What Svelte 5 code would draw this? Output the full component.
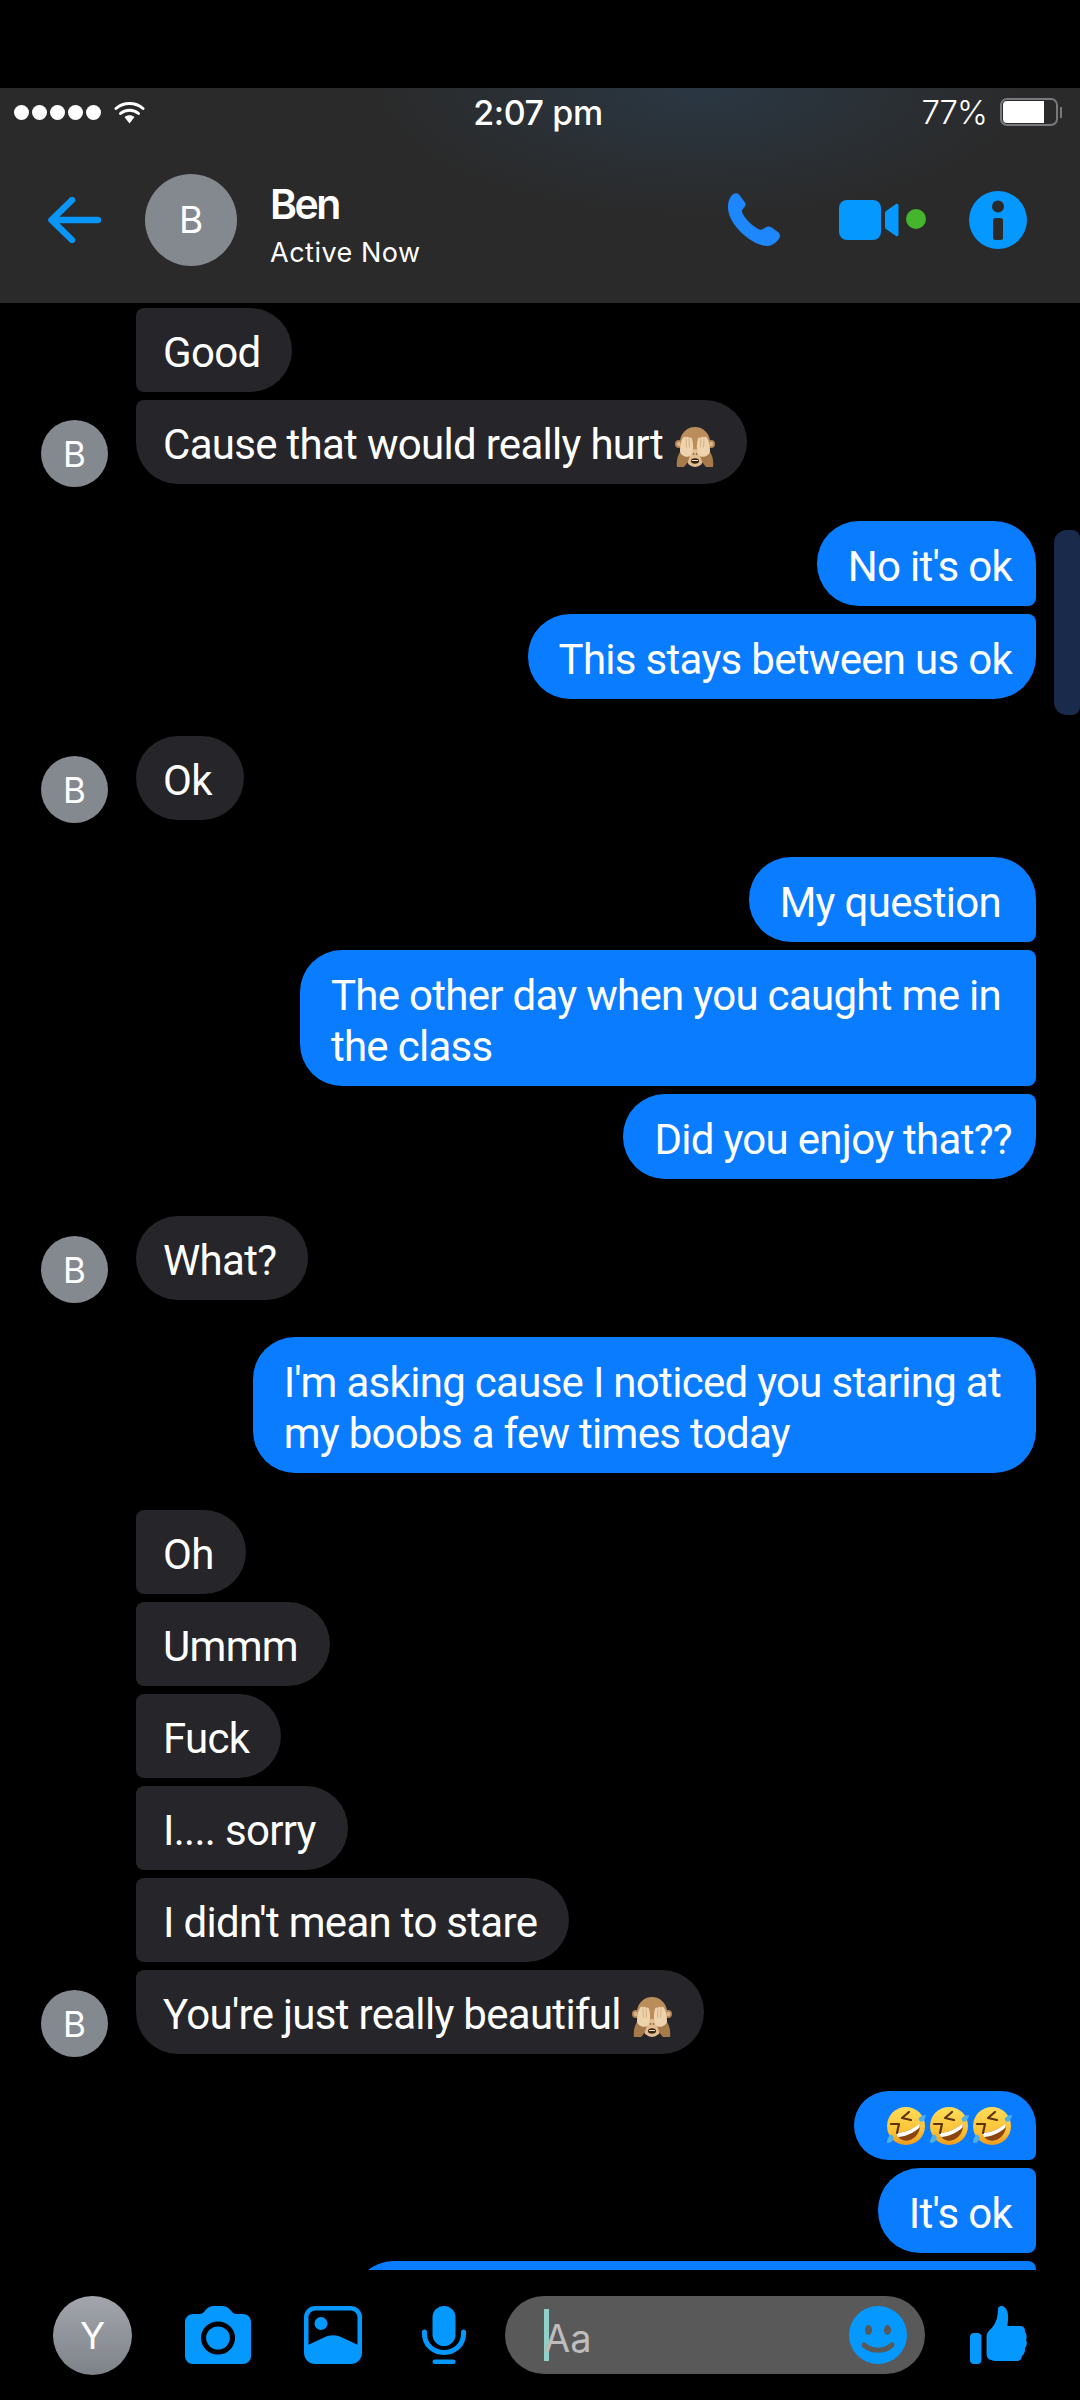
<script>
	const messages = [
		{ id: 1, side: 'in', text: 'Good', shape: 'first' },
		{ id: 2, side: 'in', text: 'Cause that would really hurt', shape: 'last', avatar: true, emoji: 'monkey' },
		{ id: 3, side: 'out', text: "No it's ok", shape: 'first', gap: true },
		{ id: 4, side: 'out', text: 'This stays between us ok', shape: 'last' },
		{ id: 5, side: 'in', text: 'Ok', shape: 'solo', avatar: true, gap: true },
		{ id: 6, side: 'out', text: 'My question', shape: 'first wrapped', gap: true },
		{ id: 7, side: 'out', text: 'The other day when you caught me in\nthe class', shape: 'middle wrapped' },
		{ id: 8, side: 'out', text: 'Did you enjoy that??', shape: 'last' },
		{ id: 9, side: 'in', text: 'What?', shape: 'solo', avatar: true, gap: true },
		{ id: 10, side: 'out', text: "I'm asking cause I noticed you staring at\nmy boobs a few times today", shape: 'solo wrapped', gap: true },
		{ id: 11, side: 'in', text: 'Oh', shape: 'first', gap: true },
		{ id: 12, side: 'in', text: 'Ummm', shape: 'middle' },
		{ id: 13, side: 'in', text: 'Fuck', shape: 'middle' },
		{ id: 14, side: 'in', text: 'I.... sorry', shape: 'middle' },
		{ id: 15, side: 'in', text: "I didn't mean to stare", shape: 'middle' },
		{ id: 16, side: 'in', text: "You're just really beautiful", shape: 'last', avatar: true, emoji: 'monkey' },
		{ id: 17, side: 'out', text: '', shape: 'first', gap: true, emoji: 'rofl' },
		{ id: 18, side: 'out', text: "It's ok", shape: 'middle' },
		{ id: 19, side: 'out', text: '', shape: 'middle cut' }
	];
</script>

{#snippet monkey()}
	<svg class="monkey" viewBox="0 0 40 40" aria-hidden="true">
		<circle cx="4" cy="17" r="4" fill="#b38654" />
		<circle cx="36" cy="17" r="4" fill="#b38654" />
		<circle cx="4" cy="17" r="2.200" fill="#dcb78d" />
		<circle cx="36" cy="17" r="2.200" fill="#dcb78d" />
		<ellipse cx="20" cy="15" rx="15" ry="15" fill="#bb8d5b" />
		<ellipse cx="20" cy="31" rx="9" ry="9" fill="#e1bd92" />
		<ellipse cx="20" cy="34" rx="4" ry="2.800" fill="#3a2213" />
		<path d="M17 33h6v1h-6z" fill="#efe0cc" />
		<circle cx="18.500" cy="27" r=".8" fill="#6b4526" />
		<circle cx="21.500" cy="27" r=".8" fill="#6b4526" />
		<path d="M2 40c-1-7 1-13 5-18l8 6c-1 5-3 9-6 12z" fill="#a77a4b" />
		<path d="M38 40c1-7-1-13-5-18l-8 6c1 5 3 9 6 12z" fill="#a77a4b" />
		<path d="M5 24c0-6 1-10 3-13 1-2 3-1.500 3 0 .5-1.500 2.500-1.800 3 0 .8-1 2.500-.8 3 .8 1.200 4 1.500 9 .5 13-1 3.200-2.500 5-5 5-3 0-7.500-2-7.500-5.800z" fill="#eed3ad" />
		<path d="M35 24c0-6-1-10-3-13-1-2-3-1.500-3 0-.5-1.500-2.500-1.800-3 0-.8-1-2.500-.8-3 .8-1.200 4-1.500 9-.5 13 1 3.200 2.500 5 5 5 3 0 7.500-2 7.500-5.800z" fill="#eed3ad" />
		<path d="M11 11.500l.5 9M14 11.500l.5 9M29 11.500l-.5 9M26 11.500l-.5 9" stroke="#cfa77c" stroke-width=".8" fill="none" />
	</svg>
{/snippet}

{#snippet rofl()}
	<svg class="rofl" viewBox="0 0 40 40" aria-hidden="true">
		<defs>
			<linearGradient id="roflFace" x1="0" y1="0" x2="0" y2="1">
				<stop offset="0" stop-color="#ffdd5c" />
				<stop offset="0.65" stop-color="#fcc134" />
				<stop offset="1" stop-color="#ee9a1c" />
			</linearGradient>
		</defs>
		<circle cx="20" cy="20" r="19" fill="url(#roflFace)" />
		<path d="M10 27c8 0 18-4 24-10 1 8-4 16-12 17.500-6 1-10-2.500-12-7.500z" fill="#8a4510" />
		<path d="M10 27c8 0 18-4 24-10l-.5 4.500C28 27 18 31 12 31z" fill="#fff" />
		<path d="M23 6l-7 6 9 2M5 18h8l-2 9" fill="none" stroke="#5b3410" stroke-width="2.200" stroke-linecap="round" stroke-linejoin="round" />
		<path d="M33 12c2-2 4-3 7-3-.5 3-1.500 5-3.500 6.500-2.500 1-4.500-1.500-3.500-3.500z" fill="#4fb0e8" />
		<path d="M4 29c-2 2-3 5-3 8 3 0 5-1 6.500-3.500 1-2.500-1.500-5.500-3.500-4.500z" fill="#4fb0e8" />
	</svg>
{/snippet}

<div class="phone">
	<div class="topgap"></div>

	<header class="header">
		<div class="status">
			<div class="status-left">
				<div class="dots">
					<span></span><span></span><span></span><span></span><span></span>
				</div>
				<svg class="wifi" viewBox="0 0 30 23" aria-hidden="true">
					<path d="M1.500 7.500C9 .8 21 .8 28.500 7.500" />
					<path d="M6 12.500c5-4.500 13-4.500 18 0" />
					<path class="wedge" d="M10 16c3-2.200 7-2.200 10 0l-5 6.500z" />
				</svg>
			</div>
			<div class="time">2:07 pm</div>
			<div class="status-right">
				<span class="percent">77%</span>
				<div class="battery"><div class="level"></div></div>
				<div class="nub"></div>
			</div>
		</div>

		<div class="nav">
			<svg class="back" viewBox="0 0 53 46" aria-hidden="true">
				<path d="M50 23H4M24 3 3.500 23 24 43" />
			</svg>
			<div class="avatar big">B</div>
			<div class="who">
				<div class="name">Ben</div>
				<div class="active">Active Now</div>
			</div>
			<svg class="call" viewBox="0 0 50 53" preserveAspectRatio="none" aria-hidden="true">
				<path d="M3 3C5 0 9-1 11 2l5 7c1.500 2 1 4-.5 5.500L13.500 17c-.5 1 0 3 2.500 7 3.500 5 8 9 13 12 2 1 3.500 1 4.500 0l2.500-1.500c2-1.500 4-1.500 6 0l6 4.500c2.500 2 2.500 5 .5 7.500C46 50 42 53 38 53 24 53-1 32 0 13 0 9 1.500 5.500 3 3z" />
			</svg>
			<svg class="video" viewBox="0 0 87 40" aria-hidden="true">
				<rect x="0" y="0" width="42" height="40" rx="8" />
				<path d="M46 13c0-1 .5-1.500 1-2l10-7c1-.7 2.500 0 2.500 1.500v29c0 1.500-1.500 2.200-2.500 1.500l-10-7c-.5-.5-1-1-1-2z" />
				<circle class="online" cx="77" cy="19" r="10" />
			</svg>
			<svg class="info" viewBox="0 0 58 58" aria-hidden="true">
				<circle cx="29" cy="29" r="29" />
				<circle class="cut" cx="29" cy="15.500" r="6" />
				<rect class="cut" x="24" y="27" width="10" height="22" rx="2.500" />
			</svg>
		</div>
	</header>

	<main class="thread">
		{#each messages as m (m.id)}
			<div class="row {m.side}" class:gap={m.gap}>
				{#if m.side === 'in'}
					<div class="slot">
						{#if m.avatar}<div class="avatar small">B</div>{/if}
					</div>
				{/if}
				<div class="bubble {m.side} {m.shape}" class:emojis={m.emoji === 'rofl'}>
					{m.text}
					{#if m.emoji === 'monkey'}
						{@render monkey()}
					{:else if m.emoji === 'rofl'}
						{@render rofl()}{@render rofl()}{@render rofl()}
					{/if}
				</div>
			</div>
		{/each}
		<div class="scrollbar"></div>
	</main>

	<footer class="composer">
		<div class="avatar me">Y</div>
		<svg class="camera" viewBox="0 0 64 58" preserveAspectRatio="none" aria-hidden="true">
			<path d="M8 8h6c3 0 4.500-2 6-4 2-2.500 5-4 8-4h8c3 0 6 1.500 8 4 1.500 2 3 4 6 4h6c4.500 0 8 3.500 8 8v34c0 4.500-3.500 8-8 8H8c-4.500 0-8-3.500-8-8V16c0-4.500 3.500-8 8-8z" />
			<circle class="ring" cx="32" cy="32" r="14" />
		</svg>
		<svg class="gallery" viewBox="0 0 58 58" aria-hidden="true">
			<rect class="frame" x="2.250" y="2.250" width="53.500" height="53.500" rx="9" />
			<circle cx="17" cy="17.500" r="6.500" />
			<path d="M4 39l16-7.500c6-3 12-3 18 0L54 39v12c0 3-2 5-5 5H9c-3 0-5-2-5-5z" />
		</svg>
		<svg class="mic" viewBox="0 0 44 58" aria-hidden="true">
			<rect x="10.500" y="0" width="23" height="40" rx="11.500" />
			<path class="cradle" d="M2.500 26v2c0 10 8 18.500 19.500 18.500s19.500-8.500 19.500-18.500v-2" />
			<rect x="10.500" y="53.500" width="23" height="4.500" rx="2.250" />
		</svg>
		<div class="input">
			<span class="caret"></span>
			<span class="placeholder">Aa</span>
			<svg class="smile" viewBox="0 0 58 58" aria-hidden="true">
				<circle cx="29" cy="29" r="29" />
				<ellipse class="cut" cx="19.500" cy="24" rx="3.500" ry="5" />
				<ellipse class="cut" cx="38.500" cy="24" rx="3.500" ry="5" />
				<path class="mouth" d="M15 39c8 7 20 7 28 0" />
			</svg>
		</div>
		<svg class="thumb" viewBox="0 0 55 58" preserveAspectRatio="none" aria-hidden="true">
			<rect x="0" y="27" width="11" height="31" rx="4" />
			<path d="M27 3c0-3 4-4 6-2 4 3 4.500 9 3 19h12c4 0 5.500 3 5 6 2 2 2 6 1 8 1.500 2 1 6-1 8 .5 4-1 7-3 8 0 3-2 5-5 5H26c-6 0-10-2-10-7V30c0-3 2-5 4-7 4-4 7-10 7-20z" />
		</svg>
	</footer>
</div>

<style>
	:global(body) {
		background: #000;
	}

	.phone {
		width: 1080px;
		height: 2400px;
		display: flex;
		flex-direction: column;
		background: #000;
		font-family: Inter, 'Liberation Sans', sans-serif;
		color: #fff;
		overflow: hidden;
	}

	.topgap {
		height: 88px;
		flex: none;
	}

	.header {
		height: 215px;
		flex: none;
		background:
			radial-gradient(ellipse 330px 130px at 700px 0, #2a3743 0%, rgba(42, 55, 67, 0) 100%),
			#2a2a2a;
	}

	.status {
		height: 48px;
		display: grid;
		grid-template-columns: 1fr auto 1fr;
		align-items: center;
		padding: 0 18px 0 14px;
	}

	.status-left {
		display: flex;
		align-items: center;
		gap: 13px;
	}

	.dots {
		display: flex;
		gap: 3px;
	}

	.dots span {
		width: 15px;
		height: 15px;
		border-radius: 50%;
		background: #fff;
	}

	.wifi {
		width: 31px;
		height: 23px;
		fill: none;
		stroke: #fff;
		stroke-width: 3;
		stroke-linecap: round;
	}

	.wifi .wedge {
		fill: #fff;
		stroke: none;
	}

	.time {
		font-size: 34px;
		font-weight: 500;
		letter-spacing: -0.4px;
	}

	.status-right {
		display: flex;
		align-items: center;
		justify-content: flex-end;
	}

	.percent {
		font-size: 33px;
		font-weight: 300;
		letter-spacing: -1px;
		margin-right: 13px;
	}

	.battery {
		width: 58px;
		height: 28px;
		box-sizing: border-box;
		border: 2px solid #77797c;
		border-radius: 7px;
		padding: 1px;
	}

	.level {
		width: 41px;
		height: 100%;
		background: #fff;
		border-radius: 4px 0 0 4px;
	}

	.nub {
		width: 2px;
		height: 11px;
		margin-left: 2px;
		background: #77797c;
	}

	.nav {
		height: 167px;
		display: flex;
		align-items: center;
	}

	.back {
		width: 53px;
		height: 46px;
		margin-left: 48px;
		flex: none;
		fill: none;
		stroke: #0a96f8;
		stroke-width: 6.500;
		stroke-linecap: round;
		stroke-linejoin: round;
	}

	.avatar {
		display: flex;
		align-items: center;
		justify-content: center;
		flex: none;
		border-radius: 50%;
		background: #84888f;
		color: #fff;
	}

	.avatar.big {
		width: 92px;
		height: 92px;
		margin-left: 44px;
		font-size: 37px;
	}

	.who {
		margin-left: 33px;
		padding-top: 10px;
		flex: 1;
	}

	.name {
		font-size: 41px;
		font-weight: 600;
		letter-spacing: -2.500px;
		line-height: 50px;
	}

	.active {
		font-size: 27px;
		letter-spacing: 0.5px;
		line-height: 36px;
		margin-top: 6px;
	}

	.call {
		width: 52px;
		height: 53px;
		flex: none;
		fill: #1d87fb;
	}

	.video {
		width: 87px;
		height: 40px;
		flex: none;
		margin-left: 59px;
		fill: #0599ff;
	}

	.video .online {
		fill: #44b52c;
	}

	.info {
		width: 58px;
		height: 58px;
		flex: none;
		margin-left: 43px;
		margin-right: 53px;
		fill: #0599ff;
	}

	.info .cut {
		fill: #2a2a2a;
	}

	.thread {
		height: 1967px;
		flex: none;
		position: relative;
		overflow: hidden;
		padding-top: 5px;
		box-sizing: border-box;
	}

	.row {
		display: flex;
		align-items: flex-end;
		margin-top: 8px;
	}

	.row:first-child {
		margin-top: 0;
	}

	.row.gap {
		margin-top: 37px;
	}

	.row.in {
		padding-left: 41px;
	}

	.row.out {
		justify-content: flex-end;
		padding-right: 44px;
	}

	.slot {
		width: 95px;
		flex: none;
	}

	.avatar.small {
		width: 67px;
		height: 67px;
		margin-bottom: -3px;
		font-size: 35px;
	}

	.bubble {
		font-family: Roboto, Inter, sans-serif;
		font-size: 42px;
		letter-spacing: -0.7px;
		line-height: 51px;
		border-radius: 42px;
		box-sizing: border-box;
		white-space: pre-line;
	}

	.bubble.in {
		background: #26252a;
		height: 84px;
		padding: 19px 32px 14px 27px;
	}

	.bubble.out {
		background: #0a7cff;
		padding: 20px 24px 14px 31px;
	}

	.bubble.in.first {
		border-top-left-radius: 8px;
		border-bottom-left-radius: 8px;
	}

	.bubble.in.middle {
		border-top-left-radius: 8px;
		border-bottom-left-radius: 8px;
	}

	.bubble.in.last {
		border-top-left-radius: 8px;
	}

	.bubble.out.first {
		border-bottom-right-radius: 8px;
	}

	.bubble.out.middle {
		border-top-right-radius: 8px;
		border-bottom-right-radius: 8px;
	}

	.bubble.out.last {
		border-top-right-radius: 8px;
	}

	.bubble.out.wrapped {
		padding-right: 35px;
	}

	.bubble.emojis {
		display: flex;
		gap: 3px;
		height: 69px;
		padding: 0 24px 0 32px;
		align-items: center;
	}

	.bubble.cut {
		width: 684px;
		height: 85px;
	}

	.monkey {
		width: 40px;
		height: 40px;
		vertical-align: -8px;
		margin-left: 2px;
	}

	.rofl {
		width: 40px;
		height: 40px;
		flex: none;
	}

	.scrollbar {
		position: absolute;
		top: 227px;
		right: 0;
		width: 26px;
		height: 185px;
		background: #1a2a4a;
		border-radius: 13px 8px 8px 13px;
	}

	.composer {
		flex: 1;
		display: flex;
		align-items: center;
		padding-left: 53px;
	}

	.avatar.me {
		width: 79px;
		height: 79px;
		font-size: 37px;
		background: linear-gradient(#a2a5ac, #7e8289);
	}

	.camera {
		width: 66px;
		height: 58px;
		flex: none;
		margin-left: 53px;
		fill: #0599ff;
	}

	.camera .ring {
		fill: #0599ff;
		stroke: #000;
		stroke-width: 5;
	}

	.gallery {
		width: 58px;
		height: 58px;
		flex: none;
		margin-left: 53px;
		fill: #0599ff;
	}

	.gallery .frame {
		fill: none;
		stroke: #0599ff;
		stroke-width: 4.500;
	}

	.mic {
		width: 44px;
		height: 58px;
		flex: none;
		margin-left: 60px;
		fill: #0599ff;
	}

	.mic .cradle {
		fill: none;
		stroke: #0599ff;
		stroke-width: 5;
		stroke-linecap: round;
	}

	.input {
		width: 420px;
		height: 78px;
		flex: none;
		margin-left: 39px;
		display: flex;
		align-items: center;
		background: #595959;
		border-radius: 39px;
		padding-left: 39px;
		padding-right: 18px;
		box-sizing: border-box;
		position: relative;
	}

	.caret {
		position: absolute;
		left: 39px;
		top: 13px;
		width: 5px;
		height: 52px;
		background: #8fd0c8;
	}

	.placeholder {
		flex: 1;
		font-size: 38px;
		color: #bdbdbd;
		margin-top: 5px;
		position: relative;
	}

	.smile {
		width: 58px;
		height: 58px;
		flex: none;
		fill: #0599ff;
	}

	.smile .cut {
		fill: #595959;
	}

	.smile .mouth {
		fill: none;
		stroke: #595959;
		stroke-width: 5;
		stroke-linecap: round;
	}

	.thumb {
		width: 57px;
		height: 58px;
		flex: none;
		margin-left: 45px;
		fill: #0599ff;
	}
</style>
